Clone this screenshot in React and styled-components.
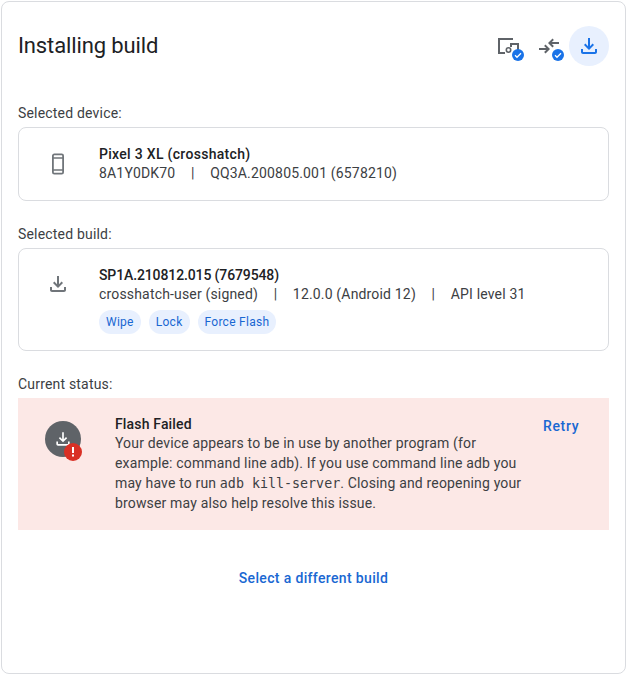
import React from "react";
import styled, { createGlobalStyle } from "styled-components";

const Global = createGlobalStyle`
  html, body { margin: 0; padding: 0; background: #fff; }
  body { font-family: Roboto, "Liberation Sans", sans-serif; color: #3c4043; }
  * { box-sizing: border-box; }
`;

const Panel = styled.div`
  width: 625px;
  height: 673px;
  margin: 1px 0 0 1px;
  border: 1px solid #dadce0;
  border-radius: 8px;
  padding: 24px 16px 0 16px;
  background: #fff;
`;
const Header = styled.header`
  display: flex;
  align-items: flex-start;
  justify-content: space-between;
  height: 40px;
  margin-bottom: 37px;
`;
const Title = styled.h1`
  margin: 0;
  font-size: 22px;
  font-weight: 400;
  line-height: 40px;
  letter-spacing: -0.13px;
  color: #202124;
`;
const Steps = styled.div`
  display: flex;
  align-items: center;
`;
const Step = styled.div`
  position: relative;
  width: 40px;
  height: 40px;
  border-radius: 50%;
  display: flex;
  align-items: center;
  justify-content: center;
  background: ${(p) => (p.$active ? "#e8f0fe" : "transparent")};
  color: ${(p) => (p.$active ? "#1a73e8" : "#5f6368")};
`;
const Check = styled.svg`
  position: absolute;
  right: 5px;
  bottom: 5px;
  width: 12px;
  height: 12px;
`;
const Label = styled.div`
  font-size: 14px;
  line-height: 20px;
  height: 20px;
  margin-bottom: 4px;
  letter-spacing: 0.19px;
  color: #3c4043;
`;
const Card = styled.section`
  display: flex;
  align-items: ${(p) => (p.$top ? "flex-start" : "center")};
  height: ${(p) => p.$h}px;
  border: 1px solid #dadce0;
  border-radius: 8px;
  padding: ${(p) => (p.$top ? "16px 0 0" : "0 0 1px")};
  margin-bottom: 23px;
`;
const IconSlot = styled.div`
  width: 78px;
  margin-right: 2px;
  flex: none;
  display: flex;
  justify-content: center;
  color: #70757a;
  margin-top: ${(p) => p.$mt || 0}px;
`;
const Name = styled.div`
  font-size: 14px;
  line-height: 20px;
  font-weight: 500;
  letter-spacing: ${(p) => p.$ls}px;
  color: #202124;
`;
const Meta = styled.div`
  font-size: 14px;
  line-height: 19px;
  letter-spacing: 0.17px;
  color: #3c4043;
  display: flex;
`;
const Sep = styled.span`
  margin: 0 15.6px;
`;
const Chips = styled.div`
  display: flex;
  gap: 8px;
  margin-top: 6px;
`;
const Chip = styled.span`
  height: 24px;
  padding: 0 7px;
  border-radius: 12px;
  background: #e8f0fe;
  color: #1967d2;
  font-size: 12px;
  line-height: 24px;
  letter-spacing: 0.27px;
`;
const Status = styled.section`
  display: grid;
  grid-template-columns: 97px 1fr 85px;
  height: 132px;
  background: #fce8e6;
  padding-top: 17px;
  margin-bottom: 38px;
`;
const Avatar = styled.div`
  position: relative;
  margin: 6px 0 0 27px;
  width: 36px;
  height: 36px;
  border-radius: 50%;
  background: #5f6368;
  color: #fff;
  display: flex;
  align-items: center;
  justify-content: center;
`;
const Alert = styled.svg`
  position: absolute;
  right: -1px;
  bottom: -4px;
  width: 18px;
  height: 18px;
`;
const Msg = styled.div`
  font-size: 14px;
  line-height: 20px;
  letter-spacing: 0.16px;
  color: #3c4043;
`;
const MsgTitle = styled.div`
  font-weight: 500;
  color: #202124;
  line-height: 18px;
`;
const Code = styled.code`
  font-family: "DejaVu Sans Mono", "Liberation Mono", monospace;
  font-size: 13.33px;
  line-height: 1;
  letter-spacing: 0;
`;
const LinkButton = styled.button`
  border: 0;
  background: none;
  padding: 0;
  font: 500 14px/20px Roboto, "Liberation Sans", sans-serif;
  letter-spacing: 0.35px;
  color: #1967d2;
  cursor: pointer;
`;
const Retry = styled(LinkButton)`
  align-self: start;
  justify-self: start;
  margin: 1px 0 0 19px;
  letter-spacing: 0.65px;
`;
const Footer = styled.div`
  display: flex;
  justify-content: center;
`;

const DownloadIcon = ({ size = 24 }) => (
  <svg width={size} height={size} viewBox="0 0 24 24" fill="currentColor">
    <path d="M18 15v3H6v-3H4v3c0 1.1.9 2 2 2h12c1.1 0 2-.9 2-2v-3h-2zm-1-4-1.41-1.41L13 12.17V4h-2v8.17L8.41 9.59 7 11l5 5 5-5z" />
  </svg>
);
const CheckBadge = () => (
  <Check viewBox="0 0 24 24">
    <circle cx="12" cy="12" r="12" fill="#1a73e8" />
    <path d="M6 12.500l4 4 8-8" fill="none" stroke="#fff" strokeWidth="2.6" />
  </Check>
);

export default function App() {
  return (
    <>
      <Global />
      <Panel>
        <Header>
          <Title>Installing build</Title>
          <Steps>
            <Step>
              <svg width="24" height="24" viewBox="0 0 24 24" fill="none" stroke="currentColor" strokeWidth="2">
                <path d="M16 5H2v14h6" />
                <path d="M14 13V10h7v8" />
                <circle cx="11.500" cy="16" r="2.200" strokeWidth="1.600" />
              </svg>
              <CheckBadge />
            </Step>
            <Step>
              <svg width="24" height="24" viewBox="0 0 24 24" fill="currentColor">
                <path d="M2 14h7.200l-2.100-2.100 1.400-1.400L13 15l-4.500 4.500-1.400-1.400 2.100-2.100H2v-2z" />
                <path d="M22 10h-7.200l2.100 2.100-1.400 1.400L11 9l4.500-4.500 1.400 1.400L14.800 8H22v2z" />
              </svg>
              <CheckBadge />
            </Step>
            <Step $active>
              <DownloadIcon />
            </Step>
          </Steps>
        </Header>

        <Label>Selected device:</Label>
        <Card $h={74}>
          <IconSlot>
            <svg width="24" height="24" viewBox="0 0 24 24" fill="none" stroke="currentColor" strokeWidth="1.800">
              <rect x="6.900" y="2.400" width="10.200" height="19.200" rx="1.400" />
              <path d="M7 6h10M7 18h10" strokeWidth="1.400" />
            </svg>
          </IconSlot>
          <div>
            <Name $ls={0.3}>Pixel 3 XL (crosshatch)</Name>
            <Meta>
              8A1Y0DK70<Sep>|</Sep>QQ3A.200805.001 (6578210)
            </Meta>
          </div>
        </Card>

        <Label>Selected build:</Label>
        <Card $h={103} $top>
          <IconSlot $mt={7}>
            <DownloadIcon />
          </IconSlot>
          <div>
            <Name $ls={-0.12}>SP1A.210812.015 (7679548)</Name>
            <Meta>
              crosshatch-user (signed)<Sep>|</Sep>12.0.0 (Android 12)<Sep>|</Sep>API level 31
            </Meta>
            <Chips>
              <Chip>Wipe</Chip>
              <Chip>Lock</Chip>
              <Chip>Force Flash</Chip>
            </Chips>
          </div>
        </Card>

        <Label>Current status:</Label>
        <Status>
          <Avatar>
            <DownloadIcon size={20} />
            <Alert viewBox="0 0 18 18">
              <circle cx="9" cy="9" r="9" fill="#d93025" />
              <path d="M8 4h2v6H8zM8 11.500h2v2H8z" fill="#fff" />
            </Alert>
          </Avatar>
          <Msg>
            <MsgTitle>Flash Failed</MsgTitle>
            Your device appears to be in use by another program (for example: command line adb). If you use command line adb you may have to run <Code>adb kill-server</Code>. Closing and reopening your browser may also help resolve this issue.
          </Msg>
          <Retry>Retry</Retry>
        </Status>

        <Footer>
          <LinkButton>Select a different build</LinkButton>
        </Footer>
      </Panel>
    </>
  );
}
